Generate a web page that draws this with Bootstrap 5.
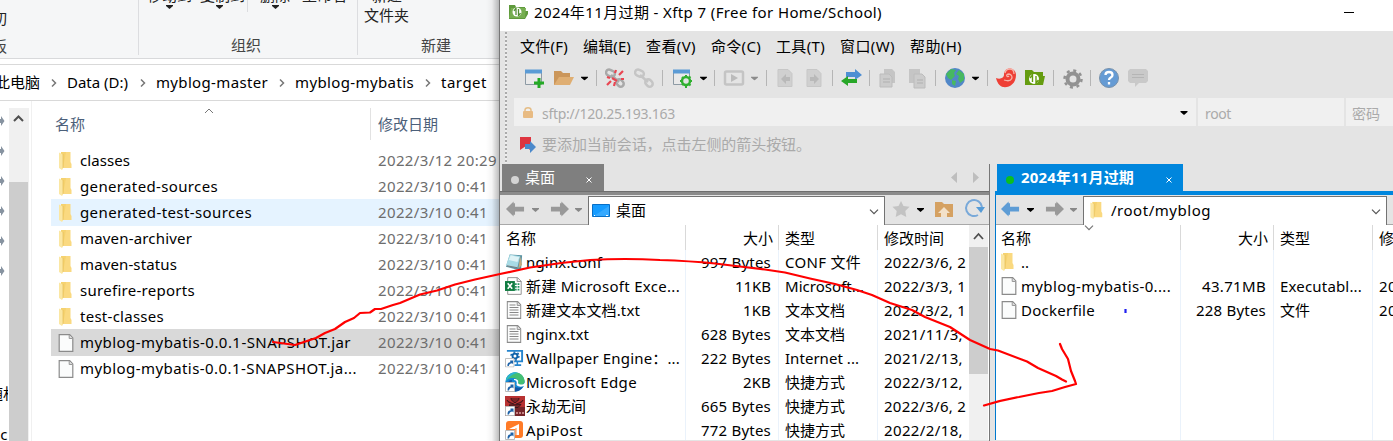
<!DOCTYPE html>
<html lang="zh-CN">
<head>
<meta charset="utf-8">
<meta name="viewport" content="width=device-width, initial-scale=1">
<title>Xftp 7</title>
<link href="https://cdn.jsdelivr.net/npm/bootstrap@5.3.0/dist/css/bootstrap.min.css" rel="stylesheet">
<style>
body{font:15px/24px "Noto Sans","Noto Sans CJK SC",sans-serif;color:#000;background:#fff;width:1393px;height:441px;overflow:hidden}
svg{display:block;flex:none;overflow:visible}
span{white-space:pre}
.explorer{width:499px;height:441px;position:relative}
.explorer::after{content:"";position:absolute;right:0;top:0;width:13px;height:100%;background:linear-gradient(90deg,#0000,#0000000a 45%,#00000042)}
.ribbon{height:59px;background:#f5f6f7;border-bottom:1px solid #d8d9db;color:#444}
.rgroup{height:55px;border-right:1px solid #dcdde0}
.rtop{height:32px;line-height:20px;color:#222}
.rcap{line-height:22px;height:22px}
.crumbs{margin-top:5px;height:37px;border:solid #d9d9d9;border-width:1px 0;line-height:35px}
.side{width:8px;padding-top:7px;margin-right:1px;white-space:nowrap;line-height:26px}
.pin{height:30px}
.sbar{width:20px;margin-top:7px;background:#f0f0f0}
.thumb{background:#cdcdcd;width:19px}
.files{border-left:1px solid #f0f0f0;margin-left:2px}
.fhead{height:46px;color:#4c607a;padding-top:7px}
.fhead>div{height:32px;line-height:33px}
.frow{height:26px;line-height:26px;margin-left:19px;padding-left:7px}
.frow svg{margin-top:1px}
.hov{background:#e5f3ff;box-shadow:0 1px #e5f3ff}
.sel{background:#d9d9d9;box-shadow:0 1px #d9d9d9}
.fdate{color:#6d6d6d}
.client{width:894px;height:441px;background:#e4e4e4;border-left:1px solid #777}
.titlebar{height:31px;background:#fff;line-height:25px}
.tools{position:relative}
.grip{position:absolute;left:5px;top:1px;height:131px;width:2px;background:repeating-linear-gradient(#aaa 0 2px,#eee 2px 4px)}
.menubar{height:30px;line-height:31px;padding-left:20px}
.icons{height:37px;padding:1px 0 0 25px}
.addr{height:28px;gap:2px;padding-left:14px;color:#aaa;font-size:14px;line-height:31px}
.addr>div{background:#f0f0f0}
.hint{height:38px;line-height:37px;color:#aaa}
.pane{height:277px}
.tabs{height:27px;line-height:29px}
.ptab{height:27px;color:#fff}
.navrow{height:30px;border-bottom:1px solid #a8a8a8;background:#e4e4e4}
.combo{height:29px;background:#fff;border:solid #737373;border-width:1px 1px 0 1px;line-height:27px;margin-top:1px}
.lrow{height:24px;line-height:23px}
.table1{height:215px;background:#fff;overflow:hidden}
.cell{height:24px;overflow:hidden;flex:none;border-right:1px solid #eaf2fb}
.lhead{height:25px}.lhead .cell{height:25px;border-color:#d9d9d9;line-height:26px}
.ink{position:absolute;left:0;top:0;pointer-events:none}
</style>
</head>
<body class="d-flex position-relative">
<svg width="0" height="0" class="position-absolute"><defs>
<symbol id="folder" viewBox="0 0 18 20"><path d="M3 1h9v15H3z" fill="#f5d26f"/><path d="M8 1h4.500v10l1 2v4H5z" fill="#fad980"/><path d="M1 1.500l4 2v14l-1 1.500-3-2z" fill="#fbe7a3"/><path d="M5 3v14" stroke="#e5bd58" stroke-width=".7"/></symbol>
<symbol id="page" viewBox="0 0 15 18"><path d="M.7.7h10.500l3.100 3.300v13.300H.7z" fill="#fbfcfc" stroke="#8b8b8b" stroke-width="1.200"/><path d="M10.700 1v3.500h3.500" fill="#ddd" stroke="#999"/></symbol>
<symbol id="text" viewBox="0 0 15 18"><use href="#page" width="15" height="18"/><path d="M3 4h6M3 6.500h9M3 9h9M3 11.500h9M3 14h9" stroke="#888" stroke-width="1"/></symbol>
<symbol id="short" viewBox="0 0 10 10"><path d="M.5.500h9v9h-9z" fill="#fff" stroke="#bbb"/><path d="M2.500 8.500c0-3 1-4 3-4V2.500h3v4L7.500 5.500c-2 0-3 1-3.500 3z" fill="#1d62a8"/></symbol>
<symbol id="conf" viewBox="0 0 20 20"><path d="M5 2l13 1-1 14-5 1-11-3z" fill="#5a94a4"/><path d="M5 2l11 2-3 12-12-2z" fill="#a8dbe5"/><path d="M6 3l9 2-2 5-9-2z" fill="#dff3f6"/><path d="M16 4l2 9-4 4z" fill="#c3aa81"/><path d="M2 14l11 2" stroke="#777"/></symbol>
<symbol id="excel" viewBox="0 0 20 20"><path d="M3 .7h11l4 4v14.600H3z" fill="#fff" stroke="#8a8a8a"/><path d="M13.500 1v4H18" fill="#eee" stroke="#888"/><path d="M11 8h5M11 11h5M11 14h5" stroke="#279563" stroke-width="2" stroke-dasharray="2 1"/><path d="M0 4.500h11v11H0z" fill="#107c41"/><path d="M3 7l5 6M8 7l-5 6" stroke="#fff" stroke-width="1.800"/></symbol>
<symbol id="wall" viewBox="0 0 20 20"><path d="M2 2.500h16v11H9" fill="#fff" stroke="#2584cd" stroke-width="2"/><path d="M13 14v3M10 17.500h7" stroke="#2584cd" stroke-width="1.600"/><circle cx="10.500" cy="8" r="2.600" fill="none" stroke="#0d62aa" stroke-width="2"/><circle cx="10.500" cy="8" r="4.200" fill="none" stroke="#0d62aa" stroke-width="1.500" stroke-dasharray="2 2.400"/><use href="#short" y="10" width="10" height="10"/></symbol>
<symbol id="edge" viewBox="0 0 20 20"><circle cx="10" cy="10" r="9.700" fill="#1689d5"/><path d="M1 7C5-2 18-2 19.700 9c0 4-5 5-7 3 2-3-1-6-5-6-3 0-5 1-6.700 3z" fill="#43bf73"/><path d="M1 7C4 1 9-1 13 1c-5 0-9 4-12 8z" fill="#2bb6d3"/><path d="M7 8c-2 7 5 9 11 7-4 6-12 6-15 1-2-4 0-8 4-8z" fill="#1257a6"/><path d="M9 8c3 0 3 3 2.500 5 2 2 5 2 7 1l1.500 0V11c-3 3-7 1-7 0 1-3-1-4-4-4z" fill="#fff"/><use href="#short" y="10" width="10" height="10"/></symbol>
<symbol id="game" viewBox="0 0 20 20"><path d="M0 0h20v20H0z" fill="#b83232"/><path d="M0 11h20v9H0z" fill="#772529"/><path d="M2 4c1 3 4 3 7 4M18 4c-1 3-4 3-7 4M6 2c0 3 2 3 4 5 2-2 4-2 4-5M4 9l12-.5-3 3H7z" stroke="#3a151b" fill="#3a151b" fill-opacity=".5"/><path d="M11 17h8" stroke="#c48484" stroke-width="2" stroke-dasharray="2 1"/><use href="#short" y="10" width="10" height="10"/></symbol>
<symbol id="api" viewBox="0 0 20 20"><rect x="1" y="1" width="17" height="17" rx="3" fill="#ff7b27"/><path d="M4 9l10-5v11h-3V9z" fill="#fff"/><path d="M11 8v7" stroke="#ffb07d" stroke-width="1.500"/><use href="#short" y="10" width="10" height="10"/></symbol>
<symbol id="caret" viewBox="0 0 7 4"><path d="M0 0h7v1L3.500 4 0 1z" fill="currentColor"/></symbol>
<symbol id="arrow" viewBox="0 0 20 16"><path d="M0 8l8-8v2H9.500v3.500H19v5H9.500V14H8v2z" fill="currentColor"/></symbol>
<symbol id="chev" viewBox="0 0 10 6"><path d="M1 .7l4 4 4-4" fill="none" stroke="currentColor" stroke-width="1.200"/></symbol>
<symbol id="win" viewBox="0 0 20 20"><path d="M1.500 2.500h16v14h-16z" fill="#e9e9e9" stroke="#8d9aa4"/><path d="M1 1.500h17v4H1z" fill="#5b9bd5"/></symbol>
<symbol id="link" viewBox="0 0 20 20"><path d="M6 7l8 7" stroke="currentColor" stroke-width="2.500"/><rect x="1" y="2" width="9" height="6" rx="3" transform="rotate(25 5 5)" fill="none" stroke="currentColor" stroke-width="2.500"/><rect x="11" y="12" width="8" height="6" rx="3" transform="rotate(45 15 15)" fill="none" stroke="currentColor" stroke-width="2.500"/></symbol>
</defs></svg>

<section class="explorer overflow-hidden flex-shrink-0">
  <div class="ribbon d-flex">
    <div class="rgroup" style="width:139px">
      <div class="rtop" style="padding-top:8px;margin-left:-8px">切</div><div class="rcap" style="margin:3px 0 0 -8px">板</div>
    </div>
    <div class="rgroup" style="width:219px">
      <div class="rtop d-flex">
        <div style="width:109px;padding-left:8px;height:12px;border-right:1px solid #dcdde0">
          <div style="margin-top:-15px;height:20px"><span>移动到</span><span class="ms-1"> 复制到</span></div>
          <div class="d-flex" style="gap:43px;padding-left:19px"><svg width="7" height="4"><use href="#caret"/></svg><svg width="7" height="4"><use href="#caret"/></svg></div>
        </div>
        <div style="padding-left:12px">
          <div style="margin-top:-15px;height:20px"><span>删除</span><span style="margin-left:12px">重命名</span></div>
          <svg width="7" height="4" style="margin-left:12px"><use href="#caret"/></svg>
        </div>
      </div>
      <div class="rcap" style="margin:2px 0 0 92px">组织</div>
    </div>
    <div>
      <div class="rtop d-flex flex-column" style="padding-left:6px"><div style="margin-top:-15px;padding-left:8px;height:20px">新建</div><div>文件夹</div></div>
      <div class="rcap" style="margin:2px 0 0 63px">新建</div>
    </div>
  </div>
  <div class="crumbs d-flex align-items-center">
    <span style="width:67px;margin-left:-5px" class="d-flex align-items-center"><span data-w="45">此电脑</span><svg width="6" height="10" style="margin-left:11px"><path d="M1 1.500L4.500 5 1 8.500" fill="none" stroke="#777" stroke-width="1.500"/></svg></span>
    <span style="width:94px;margin-left:5px" class="d-flex align-items-center"><span data-w="61">Data (D:)</span><svg width="6" height="10" style="margin-left:12px"><path d="M1 1.500L4.500 5 1 8.500" fill="none" stroke="#777" stroke-width="1.500"/></svg></span>
    <span style="width:134px;margin-left:-5px" class="d-flex align-items-center"><span data-w="112">myblog-master</span><svg width="6" height="10" style="margin-left:11px"><path d="M1 1.500L4.500 5 1 8.500" fill="none" stroke="#777" stroke-width="1.500"/></svg></span>
    <span style="width:141px;margin-left:5px" class="d-flex align-items-center"><span data-w="119">myblog-mybatis</span><svg width="6" height="10" style="margin-left:11px"><path d="M1 1.500L4.500 5 1 8.500" fill="none" stroke="#777" stroke-width="1.500"/></svg></span>
    <span data-w="46" style="margin-left:5px">target</span>
  </div>
  <div class="d-flex" style="height:340px">
    <div class="side overflow-hidden">
      <div id="pins"></div>
      <div style="margin:92px 0 0 -12px">随机</div><div style="margin:15px 0 0 -7px">sc</div>
    </div>
    <div class="sbar"><svg width="20" height="74"><path d="M5 13l4.500-4.500L14 13" fill="none" stroke="#505050" stroke-width="2"/></svg><div class="thumb" style="height:259px"></div></div>
    <div class="files flex-grow-1">
      <div class="fhead d-flex"><div style="width:339px;padding-left:23px;border-right:1px solid #e2e2e2" class="d-flex">名称<svg width="10" height="6" style="margin-left:119px"><path d="M1 5l4-4 4 4" stroke="#777" fill="none"/></svg></div><div style="padding-left:7px">修改日期</div></div>
      <div id="explorerRows"></div>
    </div>
  </div>
</section>

<main class="client flex-shrink-0">
  <div class="titlebar d-flex">
    <svg width="20" height="17" style="margin:4px 0 0 9px"><path d="M0 1h6l1 2h9v4h3v3l-3 5H0z" fill="#5f9a3c"/><path d="M2 4h15l-1 10H0z" fill="#76ae50"/><circle cx="8" cy="8" r="4.500" fill="#fff"/><path d="M7 4v7M9.500 5v7M5 7l2-3M9.500 12l2-3" stroke="#528d32" stroke-width="1.300"/></svg>
    <span data-w="348" style="margin-left:5px">2024年11月过期 - Xftp 7 (Free for Home/School)</span>
    <svg width="10" height="2" style="margin:12px 0 0 462px"><path d="M0 .5h10" stroke="#000"/></svg>
  </div>
  <div class="tools">
    <div class="grip"></div>
    <div class="menubar d-flex" style="gap:15px"><span data-w="48">文件(F)</span><span data-w="48">编辑(E)</span><span data-w="50">查看(V)</span><span data-w="50">命令(C)</span><span data-w="49">工具(T)</span><span data-w="55">窗口(W)</span><span data-w="52">帮助(H)</span></div>
    <div class="icons">
    <svg width="620" height="34">
      <g transform="translate(-525 -62)">
      <use href="#win" x="524" y="68" width="20" height="20"/><path d="M539 78v10M534 83h10" stroke="#24a924" stroke-width="3"/>
      <path d="M554 71h7l2 2h7v4h3l-4 8h-15z" fill="#cb965a"/><path d="M559 77h15l-4 8h-16z" fill="#dfae72"/><use href="#caret" x="581" y="76.500" width="7" height="4"/>
      <path d="M596.500 70v16M662.500 70v16M714.500 70v16M766.500 70v16M832.500 70v16M869.500 70v16M935.500 70v16M987.500 70v16M1053.500 70v16M1090.500 70v16" stroke="#b5b5b5"/>
      <use href="#link" x="605" y="68" width="20" height="20" color="#a9a9a9"/><path d="M615 73l1-3M619 75l4-4M621 79h3M611 81l-4 4M615 82l-1 4M607 77l3 1M612 78l5 3" stroke="#e94652" stroke-width="2.200"/>
      <use href="#link" x="634" y="68" width="20" height="20" color="#c5c5c5"/>
      <use href="#win" x="672" y="68" width="20" height="20"/><circle cx="686" cy="81" r="4" fill="#e4e4e4" stroke="#30b030" stroke-width="2.500"/><path d="M686 75v2M686 85v3M680 81h2M690 81h2M682 77l1 1M689 84l1.500 1.500M682 85l1-1M689 78l1.500-1.500" stroke="#30b030" stroke-width="2"/><use href="#caret" x="700" y="76.500" width="7" height="4"/>
      <rect x="725" y="71.500" width="18" height="13" rx="1.500" fill="none" stroke="#c4c4c4" stroke-width="2.500"/><path d="M731 74l7 4-7 4z" fill="#bbb"/><use href="#caret" x="751" y="76.500" width="7" height="4" color="#8c8c8c"/>
      <path d="M778 69.500h10l4 4v13h-14zM807 69.500h10l4 4v13h-14z" fill="#d0d0d0" stroke="#c7c7c7"/><path d="M781 79l5-5v3h4v4h-4v3zM819 79l-5-5v3h-4v4h4v3z" fill="#b9b9b9"/>
      <path d="M846 72h9v-3l7 6-7 5v-3h-9z" fill="#4e8fd3"/><path d="M857 79h-9v-3l-7 5 7 5v-3h9z" fill="#28a728"/>
      <path d="M884 69h8l3 3v11h-11zM909 69h11v14h-11z" fill="#c5c5c5"/><path d="M880 74h9l3 3v10h-12zM914 74h8l3 3v11h-11z" fill="#ccc" stroke="#bcbcbc"/><path d="M883 79h7M883 82h7M917 80h6M917 83h6" stroke="#b0b0b0"/>
      <circle cx="955" cy="78" r="10" fill="#5187c8"/><path d="M946 74l5-5 5 1-2 3 1 3-4 4-3-2zM959 70l5 4v6l-4 3-2-4 1-3-3-2zM952 80l4 1-1 5-3-2z" fill="#47b861"/><use href="#caret" x="972" y="76.500" width="7" height="4"/>
      <path d="M996 78c5 2 8-1 8-3 0-9 12-8 12 0 0 9-7 13-13 12-4-1-6-5-7-9z" fill="#ee3f35"/><path d="M1004 80c9 3 10-5 5-6-4 0-2 4 0 2M1014 74c0-7-8-6-9-1" fill="none" stroke="#f7b3aa" stroke-width="1.300"/>
      <path d="M1025 70h7l2 2h9v4h2l-2 9h-18z" fill="#659c10"/><circle cx="1034" cy="79" r="5" fill="#fff"/><path d="M1032.500 74v8M1036 76v8M1030 78l2.500-3M1036 83l2.500-3" stroke="#659c10" stroke-width="1.400"/>
      <circle cx="1073" cy="79" r="5.500" fill="none" stroke="#929292" stroke-width="4"/><circle cx="1073" cy="79" r="8.500" fill="none" stroke="#929292" stroke-width="2.500" stroke-dasharray="3 3.670"/>
      <circle cx="1109" cy="78" r="9.500" fill="#659bd4" stroke="#7892ac"/><path d="M1105.500 75c0-4 7-4 7 0 0 3-3.500 2-3.500 5M1109 82v2.500" fill="none" stroke="#fff" stroke-width="2.300"/>
      <path d="M1130 69h16l2 2v10l-2 2h-7l-4 4v-4h-5l-2-2v-10z" fill="#c9c9c9"/><path d="M1132 74.500h12M1132 77.500h12" stroke="#b5b5b5"/>
      </g></svg>
    </div>
    <div class="addr d-flex">
      <div class="d-flex" style="width:682px"><svg width="10" height="11" style="margin:9px 0 0 9px"><path d="M2 5V3c0-3 6-3 6 0v2" fill="none" stroke="#e5bd86" stroke-width="1.500"/><rect y="4" width="10" height="7" rx="1" fill="#e8bb83"/></svg><span data-w="133" style="margin-left:9px">sftp://120.25.193.163</span><svg width="8" height="4" style="margin:13px 8px 0 auto"><use href="#caret" color="#000"/></svg></div>
      <div style="width:146px;padding-left:7px"><span data-w="26">root</span></div><div class="flex-grow-1" style="padding-left:6px">密码</div>
    </div>
    <div class="hint d-flex"><svg width="18" height="18" style="margin:10px 0 0 19px"><path d="M1 1h11v14l-5-5-6 4z" fill="#de3540"/><path d="M6 8h5V5l6 6-6 6v-4H6z" fill="#4b89cb"/></svg><span data-w="269" style="margin-left:5px">要添加当前会话，点击左侧的箭头按钮。</span></div>
  </div>

  <div class="d-flex pane">
    <section style="width:490px;border-right:1px solid #777" class="flex-shrink-0">
      <div class="tabs d-flex"><div class="ptab d-flex align-items-center" style="width:102px;margin-left:2px;padding-left:9px;background:#7f7f7f"><svg width="8" height="8" style="margin-top:5px"><circle cx="4" cy="4" r="4" fill="#d4d4d4"/></svg><span style="margin-left:6px">桌面</span><svg width="6" height="6" style="margin:5px 0 0 31px"><path d="M.5.500l5 5m0-5l-5 5" stroke="#fff"/></svg></div>
      <svg width="32" height="12" style="margin:8px 0 0 347px"><path d="M6 0v11L0 5.500zM22 0v11l6-5.500z" fill="#bebebe"/></svg></div>
      <div style="height:4px;background:#8b8b8b;border-top:1px solid #6e6e6e"></div>
      <div class="navrow d-flex">
        <svg width="88" height="29"><use href="#arrow" x="6" y="6" width="19" height="16" color="#999"/><use href="#caret" x="32" y="13" width="7" height="4" color="#888"/><use href="#arrow" x="-69" y="6" width="19" height="16" color="#999" transform="scale(-1 1)"/><use href="#caret" x="75" y="13" width="7" height="4" color="#888"/></svg>
        <div class="combo d-flex" style="width:297px"><svg width="19" height="15" style="margin:7px 0 0 3px"><path d="M.5.500h17v12h-17z" fill="#169cff" stroke="#086fc6"/><path d="M2 12L17 2v10z" fill="#35a9ff"/><path d="M2 11.500h1M14 11.500h2" stroke="#fff"/></svg><span style="margin-left:5px">桌面</span><svg width="10" height="6" style="margin:12px 5px 0 auto"><use href="#chev" color="#555"/></svg></div>
        <svg width="104" height="29"><path d="M16 6l2.500 5 6 .8-4.200 4.200 1 6-5.300-2.800-5.300 2.800 1-6-4.200-4.200 6-.8z" fill="#c3c3c3"/><use href="#caret" x="32" y="13" width="7" height="4"/><path d="M50 7h7l2 2h9v13H50z" fill="#d5a162"/><path d="M53 18l6-6 6 6h-3v4h-6v-4z" fill="#f3e1c9"/><path d="M93 20a8 8 0 1 1 4-8" fill="none" stroke="#79a9d9" stroke-width="2"/><path d="M91 12h9l-4 6z" fill="#559bd7"/></svg>
      </div>
      <div class="table1 d-flex"><div id="localRows" style="width:469px" class="overflow-hidden"></div><div style="width:19px;background:#f0f0f0"><svg width="19" height="22"><path d="M5 14l4.500-5 4.500 5" fill="none" stroke="#505050" stroke-width="1.800"/></svg><div class="thumb" style="height:127px"></div></div></div>
    </section>
    <section style="width:399px;margin-left:5px">
      <div class="tabs"><div class="ptab d-flex align-items-center" style="width:186px;margin-left:2px;padding-left:9px;background:#0086dd"><svg width="8" height="8" style="margin-top:5px"><circle cx="4" cy="4" r="4" fill="#0bbe20"/></svg><span data-w="113" class="fw-bold" style="margin-left:7px">2024年11月过期</span><svg width="6" height="6" style="margin:5px 0 0 32px"><path d="M.5.500l5 5m0-5l-5 5" stroke="#fff"/></svg></div></div>
      <div style="height:4px;background:#0086dd"></div>
      <div style="border-left:1px solid #0079ce">
      <div class="navrow d-flex">
        <svg width="87" height="29"><use href="#arrow" x="5" y="6" width="19" height="16" color="#5d9cd5"/><use href="#caret" x="31" y="13" width="7" height="4"/><use href="#arrow" x="-68" y="6" width="19" height="16" color="#999" transform="scale(-1 1)"/><use href="#caret" x="74" y="13" width="7" height="4" color="#888"/></svg>
        <div class="combo d-flex" style="width:304px"><svg width="18" height="19" style="margin:4px 0 0 5px"><use href="#folder"/></svg><span data-w="100" style="margin-left:4px">/root/myblog</span><svg width="10" height="6" style="margin:12px 5px 0 auto"><use href="#chev" color="#555"/></svg></div>
      </div>
      <div class="table1 overflow-hidden position-relative"><div id="remoteRows"></div><svg class="position-absolute" style="left:88px;top:0" width="10" height="6"><use href="#chev" color="#777"/></svg></div>
      </div>
    </section>
  </div>
</main>
<svg class="ink" width="1393" height="441" fill="none" stroke="#ff0000" stroke-width="2.200" stroke-linecap="round" stroke-linejoin="round">
<path d="M273 342l22 3 12-4 9-3 9-5 10-4 10-7 9-4 6-5 10-.5 5-3.500h6l12-4 7-2 20-8.500 17-4 18-6 20-5 25-5.500 30-6.500q30-5 60-7.500 35-2 70 0 30 1 55 3.500l25 3 25 3 20 3 25 6 25 5.500 22 6 15 5 18 8 22 7 13 7 25 10 20 13 20 9 8 1.500 29 11 11 6.500 18 8 6 3.500 4 2"/>
<path d="M1060 344l2 5 6 10 3 12 4 10 1 3-11 3-13 4-13 2-20 4q-17 3-35 8.500"/>
<path d="M1125.500 309v4" stroke="#2020f0" stroke-linecap="butt"/>
</svg>
<script>
const $ = id => document.getElementById(id);
const txt = (s, w) => `<span${w ? ` data-w="${w}"` : ''}>${s}</span>`;
const ico = (n, w, h) => `<svg width="${w}" height="${h}"><use href="#${n}"/></svg>`;
$('pins').innerHTML = '<div class="pin"><svg width="5" height="20"><path d="M0 11h1V8l3.500 5L1 18v-3H0z" fill="#8793a0"/></svg></div>'.repeat(6);
$('explorerRows').innerHTML = [
  ['classes',50],['generated-sources',138],['generated-test-sources',172],['maven-archiver',112],['maven-status',97],['surefire-reports',115],['test-classes',84],
  ['myblog-mybatis-0.0.1-SNAPSHOT.jar',271],['myblog-mybatis-0.0.1-SNAPSHOT.ja...',277]
].map(([n,w],i) => `<div class="frow d-flex align-items-center ${i==2?'hov':i==7?'sel':''}"><div class="d-flex align-items-center" style="width:320px"><div style="width:22px">${i<7?ico('folder',18,20):ico('page',16,18)}</div>${txt(n,w)}</div><span class="fdate" data-w="${i?110:119}">2022/3/1${i?'0 0:41':'2 20:29'}</span></div>`).join('');

function table(id, cols, head, rows){
  const first = id === 'remoteRows' ? 5 : 6;
  const line = (r, h) => `<div class="d-flex lrow ${h?'lhead':''}">` + r.map((c,i) => {
    const pad = i==0 ? (h ? first : first-1) : i==1 ? 0 : 6;
    return `<div class="cell d-flex align-items-center ${i==1?'justify-content-end':''}" style="width:${cols[i]}px;padding-left:${pad}px;padding-right:${i==1?(h?5:7):0}px">${c}</div>`;
  }).join('') + '</div>';
  $(id).innerHTML = line(head.map(t => txt(t, t.length*15)), true) + rows.map(r => line(r)).join('');
}
const nm = (icon, w, h, n, tw) => `<div style="width:21px">${ico(icon,w,h)}</div>${txt(n,tw)}`;
table('localRows',[186,93,99,110],['名称','大小','类型','修改时间'],[
 [nm('conf',19,20,'nginx.conf',76),txt('997 Bytes',70),txt('CONF 文件',76),txt('2022/3/6, 2',82)],
 [nm('excel',18,20,'新建 Microsoft Exce...',154),txt('11KB',36),txt('Microsoft...',79),txt('2022/3/3, 1',82)],
 [nm('text',18,18,'新建文本文档.txt',114),txt('1KB',28),txt('文本文档',60),txt('2022/3/2, 1',82)],
 [nm('text',18,18,'nginx.txt',63),txt('628 Bytes',70),txt('文本文档',60),txt('2021/11/3,',79)],
 [nm('wall',19,20,'Wallpaper Engine：...',154),txt('222 Bytes',70),txt('Internet ...',74),txt('2021/2/13,',79)],
 [nm('edge',20,20,'Microsoft Edge',111),txt('2KB',28),txt('快捷方式',60),txt('2022/3/12,',79)],
 [nm('game',20,20,'永劫无间',60),txt('665 Bytes',70),txt('快捷方式',60),txt('2022/3/6, 2',82)],
 [nm('api',20,20,'ApiPost',57),txt('772 Bytes',70),txt('快捷方式',60),txt('2022/2/18,',79)]
]);
table('remoteRows',[185,93,99,60],['名称','大小','类型','修改时间'],[
 [nm('folder',18,20,'..',8),'','',''],
 [nm('page',18,18,'myblog-mybatis-0....',150),txt('43.71MB',64),txt('Executabl...',82),txt('2022/3/10',75)],
 [nm('page',18,18,'Dockerfile',74),txt('228 Bytes',70),txt('文件',30),txt('2022/3/10',75)],
 ['','','',''],['','','',''],['','','',''],['','','',''],['','','','']
]);
document.querySelectorAll('[data-w]').forEach(s => {
  const n = [...s.textContent].length;
  s.style.flex = 'none';
  s.style.letterSpacing = (s.dataset.w - s.getBoundingClientRect().width) / n + 'px';
});
</script>
<script src="https://cdn.jsdelivr.net/npm/bootstrap@5.3.0/dist/js/bootstrap.bundle.min.js"></script>
</body>
</html>
